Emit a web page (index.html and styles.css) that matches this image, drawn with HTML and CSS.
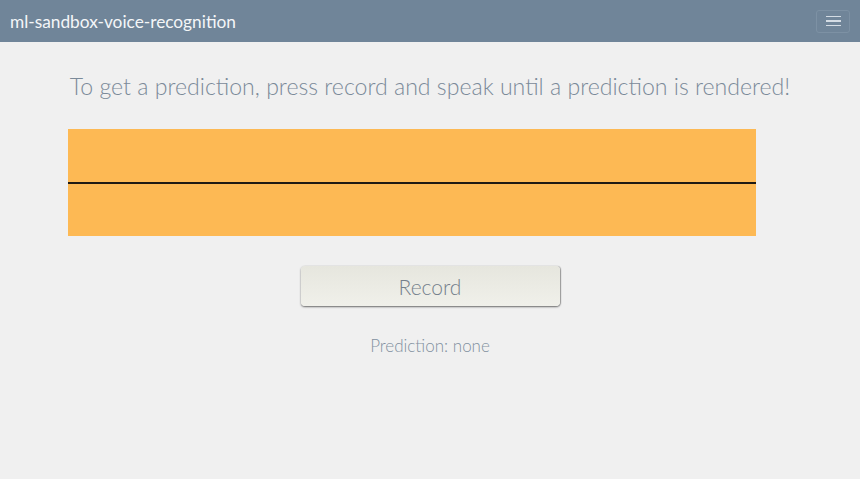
FILE: index.html
```html
<!DOCTYPE html>
<html>
<head>
<meta charset="utf-8">
<link rel="stylesheet" href="styles.css">
</head>
<body>
<nav class="navbar">
  <span class="brand">ml-sandbox-voice-recognition</span>
  <button class="toggler" aria-label="menu">
    <span class="bar"></span><span class="bar"></span><span class="bar"></span>
  </button>
</nav>
<main class="content">
  <h1 class="lead">To get a prediction, press record and speak until a prediction is rendered!</h1>
  <div class="wave"><div class="line"></div></div>
  <div class="actions">
    <button class="record">Record</button>
    <p class="prediction">Prediction: none</p>
  </div>
</main>
</body>
</html>
```
FILE: styles.css
```css
html, body {
  margin: 0;
  padding: 0;
  background: #f0f0f0;
  font-family: Lato, "Open Sans", sans-serif;
  height: 100%;
}
.navbar {
  height: 42px;
  background: #708599;
  display: flex;
  align-items: center;
  justify-content: space-between;
  padding: 0 10px 0 10px;
  box-sizing: border-box;
}
.brand {
  color: #f4f6f8;
  font-size: 17.3px;
  font-weight: 400;
}
.toggler {
  width: 34px;
  height: 23px;
  background: transparent;
  border: 1px solid #7d91a4;
  border-radius: 3px;
  display: flex;
  flex-direction: column;
  justify-content: center;
  align-items: center;
  gap: 3px;
  padding: 0;
}
.toggler .bar {
  display: block;
  width: 15px;
  height: 1.5px;
  background: #d4dce4;
}
.content {
  padding: 0 0 0 68px;
}
.lead {
  margin: 29px 0 0 -68px;
  text-align: center;
  font-size: 23.1px;
  font-weight: 300;
  color: #7b8a99;
  line-height: 30px;
}
.wave {
  margin-top: 28px;
  width: 688px;
  height: 107px;
  background: #fdb954;
  display: flex;
  align-items: center;
}
.line {
  width: 100%;
  height: 2px;
  background: #1e1a14;
}
.actions {
  margin-left: -68px;
  display: flex;
  flex-direction: column;
  align-items: center;
}
.record {
  margin-top: 30px;
  width: 259px;
  height: 40px;
  border: none;
  border-radius: 4px;
  background: linear-gradient(to bottom, #e6e6de, #f0f0ea);
  box-shadow: 0 1px 2px rgba(0,0,0,0.55), 1px 0 1px rgba(0,0,0,0.25);
  font-family: Lato, sans-serif;
  font-size: 21px;
  font-weight: 300;
  color: #747f8b;
  padding: 0;
}
.prediction {
  margin: 29px 0 0 0;
  font-size: 17px;
  font-weight: 300;
  color: #8290a0;
}
```
